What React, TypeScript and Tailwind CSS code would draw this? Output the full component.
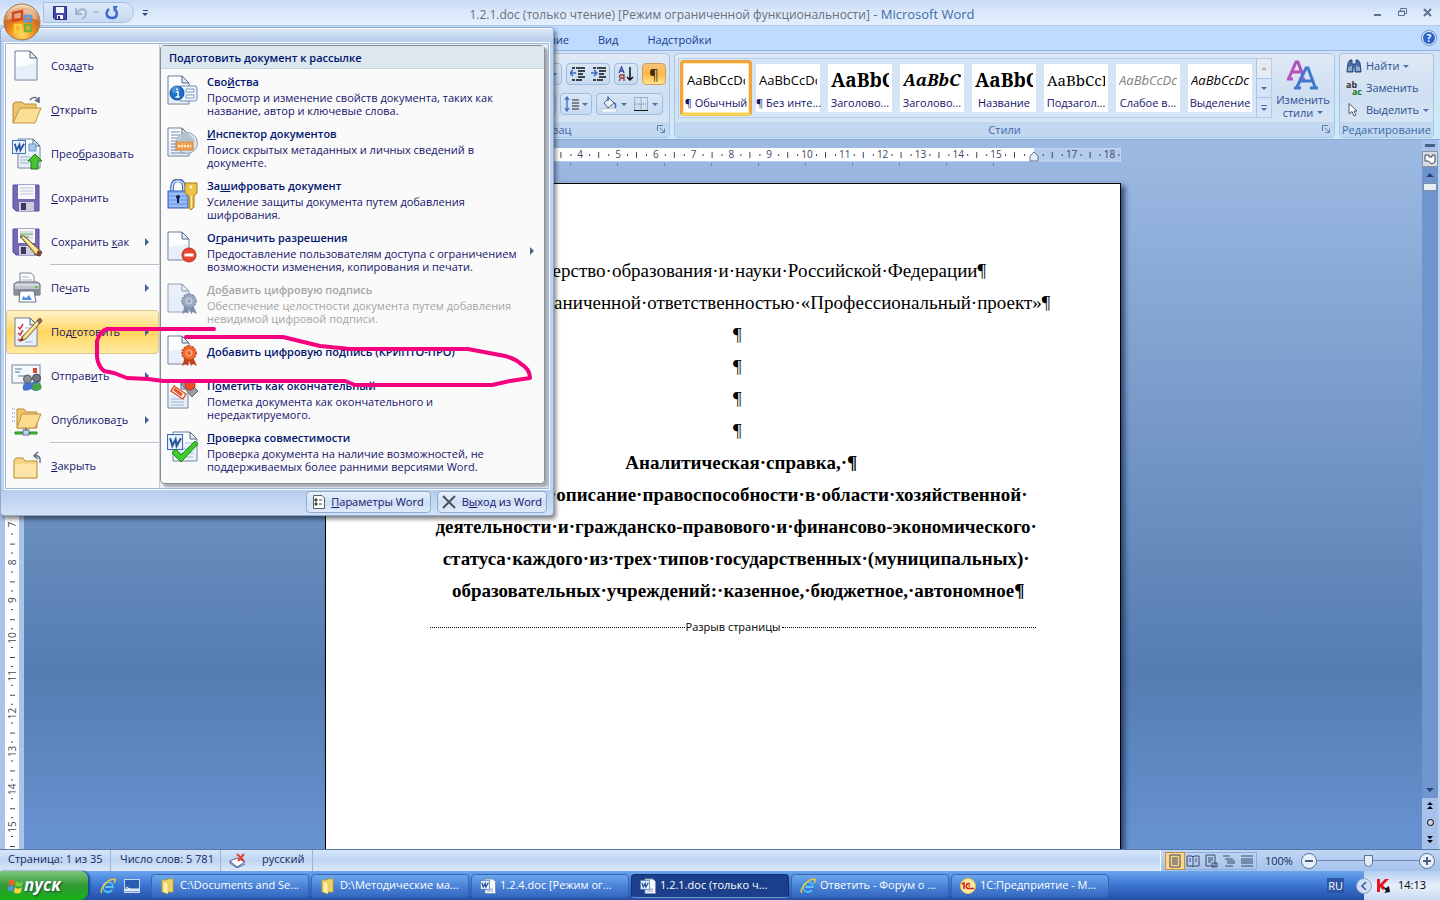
import type { ReactNode } from "react";

/* ---------- shared icon parts ---------- */

function Sheet({ x = 4, y = 1, w = 22, h = 29, fill = "#fbfdff" }: { x?: number; y?: number; w?: number; h?: number; fill?: string }) {
  const r = x + w;
  const b = y + h;
  return (
    <>
      <path d={`M${x} ${y}H${r - 7}L${r} ${y + 7}V${b}H${x}Z`} fill={fill} stroke="#6c7f9c" />
      <path d={`M${x + 1} ${b - 1}V${b - 13}L${r - 1} ${y + 12}V${b - 1}Z`} fill="#dbe8f6" opacity="0.6" />
      <path d={`M${r - 7} ${y}V${y + 7}H${r}Z`} fill="#e3ecf6" stroke="#53647f" />
    </>
  );
}

function Pencil() {
  return (
    <g>
      <path d="M29 2L31 5L15 23L10 25L12 20Z" fill="#eec667" stroke="#6b5423" strokeWidth="0.8" />
      <path d="M29 2L31 5L28 8L25.500 5Z" fill="#8d6c62" stroke="#5d4840" strokeWidth="0.6" />
      <path d="M27 6L13.500 21.500" stroke="#fff2b8" strokeWidth="1.2" />
      <path d="M10 25L11 22.500L12.500 24Z" fill="#222" />
    </g>
  );
}

function Rosette({ main, dark }: { main: string; dark: string }) {
  return (
    <g>
      <path d="M18 22L15 31L19 29L21 31L22 25L24 31L26 29L30 31L26 22Z" fill={dark} />
      <circle cx="22" cy="18" r="7" fill={main} stroke={dark} strokeDasharray="2 1" strokeWidth="1.5" />
      <circle cx="22" cy="18" r="3.500" fill="#fff" opacity="0.45" />
      <circle cx="22" cy="18" r="2.200" fill={main} />
    </g>
  );
}

function Floppy() {
  return (
    <>
      <path d="M2 3H28V29H5L2 26Z" fill="#7767b4" stroke="#57499a" />
      <rect x="7" y="3" width="17" height="14" fill="#f6f8fb" />
      <path d="M9 6H22M9 9H22M9 12H22" stroke="#bcc6d4" />
      <rect x="8" y="20" width="15" height="9" fill="#c9ced8" />
      <rect x="10" y="21" width="5" height="7" fill="#40385f" />
    </>
  );
}

function WordMark({ x, y, s = 14 }: { x: number; y: number; s?: number }) {
  return (
    <g transform={`translate(${x} ${y}) scale(${s / 14})`}>
      <rect x="0.500" y="0.500" width="14" height="14" fill="#eaf2fd" stroke="#3b6bb5" />
      <path d="M3 4L5 11L8 5L9 11L13 4" fill="none" stroke="#2b579a" strokeWidth="2" />
    </g>
  );
}

function Icon({ children }: { children: ReactNode }) {
  return (
    <svg viewBox="0 0 32 32" className="size-8 shrink-0" aria-hidden="true">
      {children}
    </svg>
  );
}

const NewIcon = <Icon><Sheet /></Icon>;

const OpenIcon = (
  <Icon>
    <path d="M2 29V10L4 8H11L13 10H25V15H10Z" fill="#efc470" stroke="#b98a35" />
    <path d="M2 29L9 14H30L24 29Z" fill="#fbdf97" stroke="#c3943c" />
    <path d="M19 6C22 2 26 3 27 6M28 3V8L24 6" fill="none" stroke="#4d5e77" strokeWidth="1.4" />
  </Icon>
);

const ConvertIcon = (
  <Icon>
    <Sheet x={7} y={1} w={22} h={29} />
    <rect x="18" y="6" width="7" height="7" fill="#a9c7ea" stroke="#6f95c7" />
    <path d="M9 19H19M9 22H18M9 25H18" stroke="#9fb0c6" />
    <WordMark x={1} y={2} s={13} />
    <path d="M24 16L31 23H27V31H20V23H17Z" fill="#48c22f" stroke="#1c7a10" />
  </Icon>
);

const SaveIcon = <Icon><Floppy /></Icon>;

const SaveAsIcon = (
  <Icon>
    <Floppy />
    <path d="M9 8H22M9 11H18" stroke="#4db14d" strokeWidth="1.2" />
    <path d="M9 10L13 10L31 26L29 30L25 29Z" fill="#f1cf76" stroke="#5c481d" />
    <path d="M25 29L27 24L31 26L29 30Z" fill="#7b4b43" />
    <path d="M12 11L26 25" stroke="#fff4c8" strokeWidth="1.3" />
  </Icon>
);

const PrintIcon = (
  <Icon>
    <path d="M9 12V1H20L23 4V12Z" fill="#fff" stroke="#7686a0" />
    <path d="M11 5H18M11 8H21" stroke="#a7b2c4" />
    <path d="M3 12L6 10H26L29 12V23H3Z" fill="#bfc4cc" stroke="#59606d" />
    <path d="M3 17H29V23H3Z" fill="#868d99" />
    <path d="M4 13H28" stroke="#eef0f3" />
    <rect x="24" y="14" width="3" height="2" fill="#57c84b" />
    <path d="M9 19H23L25 30H8Z" fill="#fff" stroke="#60748f" />
    <path d="M11 28L12 24L15 26L18 23L21 28Z" fill="#4b92dc" />
  </Icon>
);

const PrepareIcon = (
  <Icon>
    <Sheet x={4} y={2} w={22} h={28} />
    <path d="M7 11L9 13L12 8M7 17L9 19L12 14M7 23L9 25L12 20" fill="none" stroke="#e03a3a" strokeWidth="1.5" />
    <path d="M14 12H20M14 18H20M14 26H22" stroke="#a0b1c8" />
    <Pencil />
  </Icon>
);

const SendIcon = (
  <Icon>
    <rect x="1" y="5" width="28" height="18" fill="#f5f9fd" stroke="#7285a0" />
    <rect x="22" y="8" width="4" height="5" fill="#d84c34" />
    <path d="M4 9H11M4 12H9M7 16H14" stroke="#56759e" />
    <path d="M12 30C11 22 16 21 20 23C25 20 31 22 30 29C26 32 22 31 20 29C17 31 14 31 12 30Z" fill="#4672d0" />
    <path d="M21 29C21 24 24 22 28 23C31 25 31 28 30 29C27 31 24 31 21 29Z" fill="#46a548" />
    <circle cx="16.500" cy="19" r="4" fill="#8b9099" stroke="#545b66" />
    <circle cx="25.500" cy="18" r="4" fill="#707782" stroke="#444b56" />
  </Icon>
);

const PublishIcon = (
  <Icon>
    <path d="M1 5H4M1 9H4M1 13H4M1 17H4" stroke="#7c8da8" strokeDasharray="1 1" />
    <path d="M6 24V5H13L15 8H26V24Z" fill="#efc46b" stroke="#b98934" />
    <path d="M6 24L11 10H30L24 24Z" fill="#fbdc90" stroke="#c3923a" />
    <path d="M15 24V28M4 29H26" stroke="#68788c" strokeWidth="2" />
    <path d="M4 28H11V30H4ZM19 28H26V30H19Z" fill="#53c54b" stroke="#228923" />
    <rect x="12" y="26" width="6" height="5" fill="#bfd3e6" stroke="#5a7088" />
  </Icon>
);

const CloseIcon = (
  <Icon>
    <path d="M3 28V10L5 8H12L14 11H26V28Z" fill="#f7d486" stroke="#bc8c36" />
    <path d="M4 27V14H25V27Z" fill="#fce5a6" />
    <path d="M29 13C30 8 28 5 24 6M27 2L23 6L27 9" fill="none" stroke="#566880" strokeWidth="1.4" />
  </Icon>
);

const PropsIcon = (
  <Icon>
    <Sheet x={1} y={1} w={21} h={28} />
    <rect x="12" y="11" width="18" height="15" rx="2" fill="#eef4fb" stroke="#6d88b0" />
    <path d="M19 14H27V17H19ZM19 20H27V23H19Z" fill="#fff" stroke="#7d96bb" />
    <circle cx="10" cy="18" r="7" fill="#1d70c7" stroke="#0d4b95" />
    <circle cx="8.500" cy="14.500" r="4" fill="#75b3ee" opacity="0.5" />
    <path d="M9 17H11V22M8.500 22H12.500M10 13.500V15" stroke="#fff" strokeWidth="1.6" />
  </Icon>
);

const InspectIcon = (
  <Icon>
    <Sheet x={1} y={1} w={21} h={28} />
    <path d="M4 5H13M4 8H13M4 11H12M4 14H10M4 17H9M4 20H9M4 23H11M4 26H18" stroke="#7488a6" />
    <circle cx="20" cy="16" r="10.500" fill="#d4dfea" fillOpacity="0.85" stroke="#92a0b0" />
    <path d="M11 14L15 7H22L28 14Z" fill="#b3c2d2" />
    <rect x="9" y="15" width="17" height="8" fill="#f0a45a" stroke="#cf7f36" />
    <path d="M11 19H24" stroke="#fff0d8" strokeDasharray="2 1" strokeWidth="2" />
  </Icon>
);

const EncryptIcon = (
  <Icon>
    <path d="M5 14V8C5 -1 17 -1 17 8V14" fill="none" stroke="#4f76c8" strokeWidth="4" />
    <path d="M5 14V8C5 0 17 0 17 8V14" fill="none" stroke="#dceafd" strokeWidth="1.5" />
    <rect x="1" y="12" width="20" height="17" fill="#7da6ee" stroke="#3a61b4" />
    <path d="M2 15H20M2 19H20M2 23H20M2 27H20" stroke="#b9d2fb" />
    <path d="M11 24V19" stroke="#0c1d50" strokeWidth="2" />
    <circle cx="11" cy="18" r="2" fill="#0c1d50" />
    <path d="M18 4H30V14L27 17V28L24 31L22 29V17L18 14Z" fill="#ecc24a" stroke="#a37a1c" />
    <circle cx="24" cy="8" r="1.500" fill="#fff7d0" />
    <path d="M24.500 17V29" stroke="#fff0a8" />
  </Icon>
);

const RestrictIcon = (
  <Icon>
    <Sheet x={1} y={1} w={21} h={28} />
    <circle cx="22" cy="24" r="7" fill="#e8472b" stroke="#b5311b" />
    <path d="M17.500 24H26.500" stroke="#fff" strokeWidth="3" />
  </Icon>
);

const SignDisabledIcon = (
  <Icon>
    <g opacity="0.7"><Sheet x={1} y={1} w={21} h={28} fill="#e4edf8" /></g>
    <Rosette main="#9aa9c0" dark="#7d8eaa" />
  </Icon>
);

const SignIcon = (
  <Icon>
    <Sheet x={1} y={1} w={21} h={28} />
    <Rosette main="#f4682a" dark="#c63f16" />
  </Icon>
);

const FinalIcon = (
  <Icon>
    <Sheet x={1} y={3} w={20} h={26} />
    <path d="M4 20H16M4 23H17M4 26H17" stroke="#9fb0c6" />
    <path d="M7 7L19 15L16 20L4 12Z" fill="#fff" stroke="#e2552e" strokeWidth="1.500" />
    <path d="M7 10L15 16" stroke="#e2552e" strokeWidth="3" />
    <path d="M14 5L20 1L31 12L25 18Z" fill="#999fa9" stroke="#5f6672" />
    <circle cx="23" cy="6" r="5" fill="#ee4a26" stroke="#b83216" />
  </Icon>
);

const CompatIcon = (
  <Icon>
    <Sheet x={6} y={1} w={24} h={29} />
    <path d="M18 12H26M10 18H26M10 22H26M10 26H26" stroke="#9fb4d0" />
    <WordMark x={0} y={3} s={15} />
    <path d="M5 22L9 18L14 24L28 10L31 13L14 31Z" fill="#3ecb2c" stroke="#178a10" />
  </Icon>
);

/* ---------- menu data ---------- */

type MenuItem = { pre: string; key: string; post: string; icon: ReactNode; arrow?: boolean; active?: boolean; sep?: boolean };

const MENU: MenuItem[] = [
  { pre: "Созд", key: "а", post: "ть", icon: NewIcon },
  { pre: "", key: "О", post: "ткрыть", icon: OpenIcon },
  { pre: "Прео", key: "б", post: "разовать", icon: ConvertIcon },
  { pre: "", key: "С", post: "охранить", icon: SaveIcon },
  { pre: "Сохранить ", key: "к", post: "ак", icon: SaveAsIcon, arrow: true, sep: true },
  { pre: "Пе", key: "ч", post: "ать", icon: PrintIcon, arrow: true },
  { pre: "Под", key: "г", post: "отовить", icon: PrepareIcon, arrow: true, active: true },
  { pre: "Отправ", key: "и", post: "ть", icon: SendIcon, arrow: true },
  { pre: "Опубликова", key: "т", post: "ь", icon: PublishIcon, arrow: true, sep: true },
  { pre: "", key: "З", post: "акрыть", icon: CloseIcon },
];

type SubItem = { pre: string; key: string; post: string; lines: string[]; icon: ReactNode; arrow?: boolean; disabled?: boolean };

const SUBMENU: SubItem[] = [
  { pre: "Сво", key: "й", post: "ства", lines: ["Просмотр и изменение свойств документа, таких как", "название, автор и ключевые слова."], icon: PropsIcon },
  { pre: "", key: "И", post: "нспектор документов", lines: ["Поиск скрытых метаданных и личных сведений в", "документе."], icon: InspectIcon },
  { pre: "За", key: "ш", post: "ифровать документ", lines: ["Усиление защиты документа путем добавления", "шифрования."], icon: EncryptIcon },
  { pre: "О", key: "г", post: "раничить разрешения", lines: ["Предоставление пользователям доступа с ограничением", "возможности изменения, копирования и печати."], icon: RestrictIcon, arrow: true },
  { pre: "До", key: "б", post: "авить цифровую подпись", lines: ["Обеспечение целостности документа путем добавления", "невидимой цифровой подписи."], icon: SignDisabledIcon, disabled: true },
  { pre: "Добавить цифровую подпись (КРИПТО-ПРО)", key: "", post: "", lines: [], icon: SignIcon },
  { pre: "П", key: "о", post: "метить как окончательный", lines: ["Пометка документа как окончательного и", "нередактируемого."], icon: FinalIcon },
  { pre: "", key: "П", post: "роверка совместимости", lines: ["Проверка документа на наличие возможностей, не", "поддерживаемых более ранними версиями Word."], icon: CompatIcon },
];

function MenuArrow() {
  return (
    <svg viewBox="0 0 4 8" className="h-2 w-1 shrink-0" aria-hidden="true">
      <path d="M0 0L4 4L0 8Z" fill="#46618f" />
    </svg>
  );
}

function Caret({ color = "#4d73a8" }: { color?: string }) {
  return (
    <svg viewBox="0 0 6 3" className="h-[3px] w-1.5 shrink-0" aria-hidden="true">
      <path d="M0 0H6L3 3Z" fill={color} />
    </svg>
  );
}

function OfficeMenu() {
  return (
    <div className="absolute left-0 top-[27px] z-20 w-[554px] rounded border border-[#8fa9cf] bg-[#bdd2ee] px-1 shadow-[2px_3px_4px_rgba(0,0,0,0.5)]">
      <div className="-mx-1 h-[15px] rounded-t border-t border-white bg-gradient-to-b from-[#dae7f7] to-[#b3cbea]" />
      <div className="flex border border-[#9bb7dc] bg-[#e9eef5] outline outline-white">
        <ul className="w-[154px] shrink-0 border-r border-[#c5d0de] bg-[#fafafa]">
          {MENU.map((m) => (
            <li key={m.pre + m.key + m.post}>
              <button
                type="button"
                className={`flex h-11 w-full items-center gap-2 rounded-sm border pl-1 pr-[9px] text-left text-[11px] text-[#15156b] ${
                  m.active
                    ? "border-[#dcc48b] bg-gradient-to-b from-[#fff3c9] via-[#ffd65b] to-[#ffe9a0]"
                    : "border-transparent"
                }`}
              >
                {m.icon}
                <span className="flex-1 whitespace-nowrap">
                  {m.pre}
                  <u>{m.key}</u>
                  {m.post}
                </span>
                {m.arrow && <MenuArrow />}
              </button>
              {m.sep && <div className="ml-11 h-0.5 border-t border-[#b8bec8] bg-white" />}
            </li>
          ))}
        </ul>
        <section className="mb-1 mt-px w-[385px] rounded-sm border border-[#868e9a] bg-[#fafafa] pb-0.5 shadow-[3px_3px_2px_#a8acb3]">
          <h2 className="mb-0.5 h-[23px] border-b border-[#c5d2df] bg-[#dde7ee] pl-2 text-[11px] font-semibold leading-6 text-[#00156e]">
            Подготовить документ к рассылке
          </h2>
          {SUBMENU.map((s) => (
            <button
              key={s.pre + s.key + s.post}
              type="button"
              disabled={s.disabled}
              className={`flex w-full gap-2 pl-[6px] pr-2.5 pt-1 text-left text-[11px] leading-[13px] ${s.lines.length ? "h-[52px]" : "h-11"} ${
                s.disabled ? "text-[#a5a5a5]" : "text-[#15156b]"
              }`}
            >
              {s.icon}
              <span className={`flex-1 whitespace-nowrap ${s.lines.length ? "" : "pt-2.5"}`}>
                <span className={`mb-[3px] block font-semibold ${s.disabled ? "" : "text-[#00156e]"}`}>
                  {s.pre}
                  <u>{s.key}</u>
                  {s.post}
                </span>
                {s.lines.map((l) => (
                  <span key={l} className="block">{l}</span>
                ))}
              </span>
              {s.arrow && <span className="pt-4"><MenuArrow /></span>}
            </button>
          ))}
        </section>
      </div>
      <div className="-mx-1 flex h-[26px] items-center justify-end gap-1.5 rounded-b bg-gradient-to-b from-[#b4cced] to-[#d3e2f5] pr-1.5 text-[11px] text-[#15156b]">
        <button type="button" className="flex h-[22px] items-center gap-1.5 rounded-sm border border-[#8eabd3] bg-gradient-to-b from-[#eaf2fc] via-[#cfe0f5] to-[#dfeafa] px-1.5">
          <svg viewBox="0 0 12 14" className="h-3.5 w-3" aria-hidden="true">
            <path d="M0.500 0.500H9L11.500 3V13.500H0.500Z" fill="#fff" stroke="#555f70" />
            <path d="M2 4H4V6H2ZM2 8H4V10H2ZM6 5H9M6 9H9" stroke="#444" fill="#444" />
          </svg>
          <span><u>П</u>араметры Word</span>
        </button>
        <button type="button" className="flex h-[22px] items-center gap-1.5 rounded-sm border border-[#8eabd3] bg-gradient-to-b from-[#eaf2fc] via-[#cfe0f5] to-[#dfeafa] px-1">
          <svg viewBox="0 0 14 14" className="size-3.5" aria-hidden="true">
            <path d="M1 1L13 13M13 1L1 13" stroke="#4c525c" strokeWidth="2" />
          </svg>
          <span>В<u>ы</u>ход из Word</span>
        </button>
      </div>
    </div>
  );
}

/* ---------- title bar ---------- */

function OfficeButton() {
  return (
    <button type="button" aria-label="Office" className="absolute left-[3px] top-[3px] z-30 size-[38px]">
      <svg viewBox="0 0 38 38" className="size-full">
        <defs>
          <radialGradient id="orb" cx="0.5" cy="0.85" r="0.8">
            <stop offset="0" stopColor="#ffdf62" />
            <stop offset="0.450" stopColor="#f08a1c" />
            <stop offset="0.700" stopColor="#c96a2a" />
            <stop offset="1" stopColor="#f7d9b8" />
          </radialGradient>
        </defs>
        <circle cx="19" cy="19" r="18" fill="url(#orb)" stroke="#a07347" />
        <path d="M4 17C6 3 32 3 34 17C25 14 13 14 4 17Z" fill="#fff" opacity="0.4" />
        <g fill="none" strokeWidth="2.400">
          <path d="M10 10L19 8V16L10 18Z" stroke="#d5481f" />
          <path d="M22 13H28V18H22Z" stroke="#5d9ade" />
          <path d="M12 22H18V29H12Z" stroke="#f9d23a" />
          <path d="M22 22H28V28H22Z" stroke="#74b43c" />
        </g>
      </svg>
    </button>
  );
}

function TitleBar() {
  return (
    <header className="flex h-[26px] items-center border-b border-[#b2c9e8] bg-gradient-to-b from-[#c6dbf6] via-[#dbe8fa] to-[#e4effd]">
      <div className="w-[180px] pl-[43px]">
        <div className="flex items-center gap-2">
          <div className="flex h-[21px] w-[91px] items-center gap-1.5 rounded-r-full border border-[#a5bfe2] bg-gradient-to-b from-[#dde9f9] to-[#c6d9f2] pl-[9px]">
            <button type="button" aria-label="Сохранить">
              <svg viewBox="0 0 14 14" className="size-3.5">
                <path d="M0.500 0.500H13.500V13.500H2L0.500 12Z" fill="#4848b4" stroke="#29297c" />
                <rect x="3" y="1" width="8" height="6" fill="#f2f6fc" />
                <rect x="4" y="9" width="6" height="4" fill="#fff" />
                <rect x="5" y="10" width="2" height="3" fill="#29297c" />
              </svg>
            </button>
            <button type="button" aria-label="Отменить" className="ml-0.5 flex items-center gap-1">
              <svg viewBox="0 0 14 14" className="size-3.5">
                <path d="M1 2V8H7M2 7C5 2 11 2 11 7C11 10 9 12 7 13" fill="none" stroke="#a5b4cc" strokeWidth="2" />
              </svg>
              <Caret color="#b0bed3" />
            </button>
            <button type="button" aria-label="Повторить">
              <svg viewBox="0 0 14 14" className="size-3.5">
                <path d="M4 3C0 6 1 12 7 12C13 12 13 5 9 3" fill="none" stroke="#3e6cc4" strokeWidth="2.500" />
                <path d="M8 0H13L9 6Z" fill="#3e6cc4" />
              </svg>
            </button>
          </div>
          <button type="button" aria-label="Настройка панели" className="flex flex-col items-center gap-0.5">
            <span className="h-px w-[5px] bg-[#2c4a80]" />
            <Caret color="#2c4a80" />
          </button>
        </div>
      </div>
      <h1 className="flex-1 whitespace-nowrap pt-1 text-center text-[13px] text-[#3e6aaa]">
        <span className="text-[12px] text-[#696f7c]">1.2.1.doc (только чтение) [Режим ограниченной функциональности]</span> - Microsoft Word
      </h1>
      <div className="flex w-[176px] items-center justify-end gap-4 pr-2 text-[#5f7190]">
        <button type="button" aria-label="Свернуть">
          <svg viewBox="0 0 9 9" className="size-[9px]"><path d="M1 7H8" stroke="currentColor" strokeWidth="2" /></svg>
        </button>
        <button type="button" aria-label="Восстановить">
          <svg viewBox="0 0 9 9" className="size-[9px]" fill="none" stroke="currentColor">
            <path d="M2.500 2.500V0.500H8.500V5.500H7M0.500 3H6.500V7.500H0.500ZM0 3.500H7" />
          </svg>
        </button>
        <button type="button" aria-label="Закрыть">
          <svg viewBox="0 0 9 9" className="size-[9px]"><path d="M1 1L8 8M8 1L1 8" stroke="currentColor" strokeWidth="2" /></svg>
        </button>
      </div>
    </header>
  );
}

/* ---------- ribbon ---------- */

const STYLES = [
  { name: "¶ Обычный", sample: "AaBbCcDc", look: "text-[13px] text-black", selected: true },
  { name: "¶ Без инте...", sample: "AaBbCcDc", look: "text-[13px] text-black" },
  { name: "Заголово...", sample: "AaBbC", look: "font-['Noto_Serif','Liberation_Serif',serif] text-[19px] font-bold text-black" },
  { name: "Заголово...", sample: "AaBbCc", look: "font-['Noto_Serif','Liberation_Serif',serif] text-[17px] font-bold italic text-black" },
  { name: "Название", sample: "AaBbC", look: "font-['Noto_Serif','Liberation_Serif',serif] text-[19px] font-bold text-black" },
  { name: "Подзагол...", sample: "AaBbCcI", look: "font-['Noto_Serif','Liberation_Serif',serif] text-[15px] text-black" },
  { name: "Слабое в...", sample: "AaBbCcDc", look: "text-[13px] italic text-[#808080]" },
  { name: "Выделение", sample: "AaBbCcDc", look: "text-[13px] italic text-black" },
];

function Group({ label, className, launcher, children }: { label: string; className: string; launcher?: boolean; children: ReactNode }) {
  return (
    <section className={`flex flex-col overflow-hidden rounded border border-[#a9c4e5] bg-gradient-to-b from-[#dfe9f5] via-[#cfdff1] to-[#d9e8f8] ${className}`}>
      <div className="flex-1">{children}</div>
      <div className="relative h-[15px] bg-[#c1d8f0] text-center text-[11px] leading-[15px] text-[#3e6aaa]">
        {label}
        {launcher && (
          <button type="button" aria-label={`${label}: параметры`} className="absolute right-1 top-[3px]">
            <svg viewBox="0 0 8 8" className="size-2" fill="none" stroke="#5b7fb2">
              <path d="M0.500 6V0.500H6M3 3L7 7M7.500 3.500V7.500H3.500" />
            </svg>
          </button>
        )}
      </div>
    </section>
  );
}

const toolBox = "flex h-[22px] items-center rounded-sm border border-[#9dbbe0] bg-gradient-to-b from-[#d8e6f6] to-[#c6daf1]";

function IndentIcon({ right }: { right?: boolean }) {
  return (
    <svg viewBox="0 0 16 14" className="h-3.5 w-4" aria-hidden="true">
      <path d="M2 1H5M6 1H15M8 4H15M8 7H13M8 10H15M2 13H5M6 13H12" stroke="#111" strokeWidth="1.500" />
      <path d={right ? "M0 6H5M3 3L6 6L3 9" : "M6 6H1M3 3L0 6L3 9"} fill="none" stroke="#3a69c0" strokeWidth="1.500" />
    </svg>
  );
}

function ParagraphTools() {
  return (
    <div className="flex flex-col items-end gap-2 pr-[3px] pt-[9px]">
      <div className="flex gap-1">
        <button type="button" aria-label="Список" className={`${toolBox} w-7 justify-end pr-1`}><Caret /></button>
        <div className={toolBox}>
          <button type="button" aria-label="Уменьшить отступ" className="px-[3px]"><IndentIcon /></button>
          <button type="button" aria-label="Увеличить отступ" className="px-[2px]"><IndentIcon right /></button>
        </div>
        <button type="button" aria-label="Сортировка" className={`${toolBox} w-6 justify-center`}>
          <svg viewBox="0 0 16 16" className="size-4" fill="none">
            <path d="M1 7L3.500 1L6 7M2 5H5" stroke="#2f4a9c" strokeWidth="1.300" />
            <path d="M6 15V9H3C1 9 1 12 3 12H6M3 12L1 15" stroke="#9c2f3a" strokeWidth="1.300" />
            <path d="M12 1V14M9 11L12 14L15 11" stroke="#111" strokeWidth="1.500" />
          </svg>
        </button>
        <button type="button" aria-label="Все знаки" className="flex h-[22px] w-6 items-center justify-center rounded-sm border border-[#c9a15b] bg-gradient-to-b from-[#fbc37a] via-[#ffb84a] to-[#ffe48c] text-[15px] text-[#4a2c10]">
          ¶
        </button>
      </div>
      <div className="flex gap-1 pr-[3px]">
        <button type="button" aria-label="По ширине" className={`${toolBox} w-6 justify-center`}>
          <svg viewBox="0 0 12 12" className="size-3"><path d="M0 1H12M0 4H12M0 7H12M0 10H12" stroke="#111" /></svg>
        </button>
        <button type="button" aria-label="Интервал" className={`${toolBox} w-8 justify-center gap-0.5`}>
          <svg viewBox="0 0 16 16" className="size-4" fill="none">
            <path d="M3 1V15M1 4L3 1L5 4M1 12L3 15L5 12" stroke="#3a69c0" strokeWidth="1.300" />
            <path d="M8 4H15M8 7H15M8 10H15M8 13H15" stroke="#222" />
          </svg>
          <Caret />
        </button>
        <div className={`${toolBox} w-[67px] justify-around`}>
          <button type="button" aria-label="Заливка" className="flex items-center gap-1">
            <svg viewBox="0 0 16 16" className="size-4">
              <path d="M3 7L8 2L13 7L7 12Z" fill="#eef3fa" stroke="#4d5f7c" />
              <path d="M7 5V0.500M13 7C15 8 15 10 14 12" fill="none" stroke="#3a69c0" strokeWidth="1.500" />
              <rect x="0.500" y="13" width="15" height="3" fill="#fff" stroke="#9aa9bd" strokeWidth="0.500" />
            </svg>
            <Caret />
          </button>
          <button type="button" aria-label="Границы" className="flex items-center gap-1">
            <svg viewBox="0 0 14 14" className="size-3.5" fill="none">
              <path d="M0.500 0.500H13.500V13M0.500 0.500V13M7 1V13M1 7H13" stroke="#6c7c94" strokeDasharray="1 1" />
              <path d="M0 13.500H14" stroke="#111" />
            </svg>
            <Caret />
          </button>
        </div>
      </div>
    </div>
  );
}

function Ribbon() {
  return (
    <div className="flex h-[89px] shrink-0 gap-1 border-b border-[#88a9d4] bg-gradient-to-b from-[#d3e2f4] to-[#c9ecf9] pb-px pr-1.5 pt-0.5">
      <div className="w-[437px] shrink-0" />
      <Group label="Абзац" className="w-[229px] shrink-0" launcher>
        <ParagraphTools />
      </Group>
      <Group label="Стили" className="min-w-0 flex-1" launcher>
        <div className="flex pl-[3px]">
          <div className="mt-1 flex h-[60px] min-w-0 flex-1 overflow-hidden border border-[#b5cde9] bg-[#d5e5f7]">
            <div className="flex flex-1 items-center pl-px">
              {STYLES.map((s, i) => (
                <button
                  key={i}
                  type="button"
                  className={`flex h-14 w-[72px] shrink-0 items-center justify-center ${
                    s.selected ? "rounded-sm border-[3px] border-[#f0a53c] border-b-[#f8cf4e] bg-[#ffe9a8]" : ""
                  }`}
                >
                  <span className="block h-12 w-16 bg-white">
                    <span className={`mx-[3px] block h-8 overflow-hidden whitespace-nowrap text-left leading-8 ${s.look}`}>{s.sample}</span>
                    <span className="block whitespace-nowrap text-center text-[11px] leading-[14px] text-[#15156b]">{s.name}</span>
                  </span>
                </button>
              ))}
            </div>
            <div className="flex w-[15px] flex-col border-l border-[#a9c4e5]">
              <button type="button" aria-label="Вверх" className="flex flex-1 items-center justify-center bg-[#e6ebf1]">
                <svg viewBox="0 0 6 3" className="h-[3px] w-1.5"><path d="M0 3H6L3 0Z" fill="#a9b4c3" /></svg>
              </button>
              <button type="button" aria-label="Вниз" className="flex flex-1 items-center justify-center border-y border-[#a9c4e5]"><Caret /></button>
              <button type="button" aria-label="Ещё" className="flex flex-1 flex-col items-center justify-center gap-0.5">
                <span className="h-px w-1.5 bg-[#4d73a8]" />
                <Caret />
              </button>
            </div>
          </div>
          <button type="button" className="w-[62px] shrink-0 pt-1.5 text-center text-[11px] leading-[13px] text-[#2a4f8f]">
            <svg viewBox="0 0 32 30" className="mx-auto mb-[3px] h-[30px] w-8" fill="none">
              <path d="M2 18L9 2H11L16 16M5 12H13M0 19H6M12 19H18" stroke="#b650b8" strokeWidth="3" />
              <path d="M10 27L19 8H21L28 27M13 21H25M7 28H14M23 28H31" stroke="#3f78cf" strokeWidth="3" />
            </svg>
            <span className="block">Изменить</span>
            <span className="flex items-center justify-center gap-1">стили <Caret /></span>
          </button>
        </div>
      </Group>
      <Group label="Редактирование" className="w-[95px] shrink-0">
        <div className="flex flex-col pl-1.5 pt-px text-[11px] text-[#2a4f8f]">
          <button type="button" className="flex h-[22px] items-center gap-1">
            <svg viewBox="0 0 16 14" className="h-3.5 w-4">
              <path d="M2 4L4 1H6V5H10V1H12L14 4L15 13H9V8H7V13H1Z" fill="#4a6da8" stroke="#27457c" />
              <path d="M3 8V12M5 7V12M11 7V12M13 8V12" stroke="#d7e4f7" />
            </svg>
            Найти <Caret />
          </button>
          <button type="button" className="flex h-[22px] items-center gap-1">
            <span className="flex w-4 flex-col text-[9px] font-bold leading-[7px]">
              <span className="text-left text-[#333]">ab</span>
              <span className="text-right text-[#1a7a1f]">ac</span>
            </span>
            Заменить
          </button>
          <button type="button" className="flex h-[22px] items-center gap-1">
            <svg viewBox="0 0 16 14" className="h-3.5 w-4"><path d="M3 0.500V11L6 8.500L8 13L10 12L8 8H11Z" fill="#fff" stroke="#4b5871" /></svg>
            Выделить <Caret />
          </button>
        </div>
      </Group>
    </div>
  );
}

/* ---------- rulers and page ---------- */

const CM = 37.8;

function HorizontalRuler() {
  const cm = Array.from({ length: 19 }, (_, i) => i);
  return (
    <svg className="block h-[21px] w-full" aria-hidden="true">
      <rect x="0" y="0" width="796" height="13" fill="#b3cbed" stroke="#cfdff5" />
      <rect x="104" y="0" width="605" height="13" fill="#fff" />
      {cm.map((i) => {
        const x = 104 + i * CM;
        return (
          <g key={i} fill="#3f4a5e">
            {i > 3 && i !== 16 && (
              <text x={x} y="10" fontSize="10" textAnchor="middle">{i}</text>
            )}
            <rect x={x + 9} y="6" width="1" height="2" />
            {i < 18 && <rect x={x + 18} y="4" width="1" height="6" />}
            {i < 18 && <rect x={x + 28} y="6" width="1" height="2" />}
          </g>
        );
      })}
      {Array.from({ length: 13 }, (_, i) => (
        <rect key={i} x={104 + i * 47} y="15" width="1" height="3" fill="#6480ab" />
      ))}
      <path d="M705 13V8L709 4L713 8V13Z" fill="#e7eef8" stroke="#5f7594" />
    </svg>
  );
}

function VerticalRuler() {
  return (
    <div className="flex w-6 shrink-0 bg-[#a9c3ea] pl-[5px]">
      <svg className="h-full w-[14px] bg-white" aria-hidden="true">
        {Array.from({ length: 16 }, (_, i) => {
          const y = 120 + i * CM;
          return (
            <g key={i} fill="#3f4a5e">
              {i > 6 && (
                <text x="11" y={y} fontSize="10" textAnchor="middle" transform={`rotate(-90 11 ${y})`}>{i}</text>
              )}
              <rect x="6" y={y + 9} width="2" height="1" />
              <rect x="5" y={y + 19} width="5" height="1" />
              <rect x="6" y={y + 28} width="2" height="1" />
            </g>
          );
        })}
      </svg>
    </div>
  );
}

const LINES: { text: string; tail: string; bold?: boolean }[] = [
  { text: "Министерство·образования·и·науки·Российской·Федерации", tail: "¶" },
  { text: "Общество·с·ограниченной·ответственностью·«Профессиональный·проект»", tail: "¶" },
  { text: "", tail: "¶" },
  { text: "", tail: "¶" },
  { text: "", tail: "¶" },
  { text: "", tail: "¶" },
  { text: "Аналитическая·справка,", tail: "·¶", bold: true },
  { text: "содержащая·описание·правоспособности·в·области·хозяйственной", tail: "·", bold: true },
  { text: "деятельности·и·гражданско-правового·и·финансово-экономического", tail: "·", bold: true },
  { text: "статуса·каждого·из·трех·типов·государственных·(муниципальных)", tail: "·", bold: true },
  { text: "образовательных·учреждений:·казенное,·бюджетное,·автономное", tail: "¶", bold: true },
];

function Page() {
  return (
    <article className="flex-1 border border-b-0 border-black bg-white pl-[104px] pr-[84px] pt-[71px] font-['Liberation_Serif',serif] text-[19px] leading-8 text-black shadow-[4px_3px_5px_rgba(20,40,80,0.7)]">
      {LINES.map((l, i) => (
        <p key={i} className={`flex h-8 justify-center whitespace-nowrap ${l.bold ? "font-bold" : ""}`}>
          <span>{l.text}</span>
          <span className="w-0">{l.tail}</span>
        </p>
      ))}
      <div className="mt-2.5 flex items-center font-['Open_Sans','Noto_Sans',sans-serif] text-[11px] leading-5">
        <span className="flex-1 border-t border-dotted border-black" />
        <span className="px-px">Разрыв страницы</span>
        <span className="flex-1 border-t border-dotted border-black" />
      </div>
    </article>
  );
}

function ScrollBar() {
  return (
    <div className="flex w-[18px] shrink-0 flex-col items-center border-r-2 border-[#b9d0f0] bg-[#a5c1ec] text-[#2c4470]">
      <div className="mt-1 h-[3px] w-2.5 bg-[#46608e]" />
      <button type="button" aria-label="Линейка" className="mt-1 flex size-4 items-center justify-center border border-[#8b94a3] bg-[#d8dde5]">
        <svg viewBox="0 0 12 12" className="size-3" fill="#fff" stroke="#3d4450">
          <path d="M1 2H5V4H8V2H11V9L8 11L4 8H1Z" />
        </svg>
      </button>
      <div className="flex w-full flex-1 flex-col items-center bg-[#6f95cf]">
        <button type="button" aria-label="Прокрутить вверх" className="flex h-4 items-center">
          <svg viewBox="0 0 8 4" className="h-1 w-2"><path d="M0 4H8L4 0Z" fill="currentColor" /></svg>
        </button>
        <div className="h-2 w-3.5 border border-[#7d8ea8] bg-[#e8edf4]" />
        <button type="button" aria-label="Прокрутить вниз" className="mt-auto flex h-[17px] items-center">
          <svg viewBox="0 0 8 4" className="h-1 w-2"><path d="M0 0H8L4 4Z" fill="currentColor" /></svg>
        </button>
      </div>
      <div className="flex flex-col items-center gap-2.5 pb-1.5 pt-1 text-black">
        <button type="button" aria-label="Предыдущая страница" className="flex">
          <svg viewBox="0 0 6 7" className="h-[7px] w-1.5"><path d="M0 3L3 0L6 3ZM0 7L3 4L6 7Z" fill="currentColor" /></svg>
        </button>
        <button type="button" aria-label="Объект перехода" className="size-[7px] rounded-full border border-black bg-[#cfd6e0]" />
        <button type="button" aria-label="Следующая страница" className="flex">
          <svg viewBox="0 0 6 7" className="h-[7px] w-1.5"><path d="M0 0L3 3L6 0ZM0 4L3 7L6 4Z" fill="currentColor" /></svg>
        </button>
      </div>
    </div>
  );
}

/* ---------- status bar ---------- */

function StatusBar() {
  return (
    <footer className="flex h-[22px] shrink-0 items-stretch border-t border-[#5676a8] bg-gradient-to-b from-[#d6e5f9] via-[#bfd5f3] to-[#dbe8fa] text-[11px] leading-[18px] text-[#15285c]">
      <span className="w-[111px] border-r border-[#98b4dc] pl-2">Страница: 1 из 35</span>
      <span className="w-[110px] border-r border-[#98b4dc] pl-[9px]">Число слов: 5 781</span>
      <span className="flex w-[92px] gap-[15px] border-r border-[#98b4dc] pl-2">
        <svg viewBox="0 0 18 16" className="mt-0.5 h-4 w-[18px]" aria-hidden="true">
          <path d="M1 9L8 6L16 10L8 15Z" fill="#fff" stroke="#49639a" />
          <path d="M1 9V11L8 16L16 12" fill="none" stroke="#49639a" />
          <path d="M8 2L15 9M15 2L9 9" stroke="#e2412c" strokeWidth="2" />
        </svg>
        русский
      </span>
      <div className="ml-auto flex items-center border-l border-white bg-gradient-to-b from-[#c1d7f4] to-[#a5c2ec] pl-1 pr-[5px]">
        <div className="flex h-[18px] border border-[#8fadd8]">
          {[
            "M2 1H12V13H2ZM4 4H10M4 6H10M4 8H10M4 10H10",
            "M1 2H6L7 3L8 2H13V12H8L7 13L6 12H1ZM7 3V12M3 5H5M3 7H5M9 5H11M9 7H11",
            "M2 1H11V12H2ZM4 4H9M4 6H9M4 8H7M8 9H13V13H8Z",
            "M1 2H8M3 5H11M5 7H13M5 9H13M3 12H11",
            "M1 2H13M1 5H13M1 7H13M1 9H13M1 12H13",
          ].map((d, i) => (
            <button key={i} type="button" aria-label={`Режим ${i + 1}`} className={`flex w-[18px] items-center justify-center ${i === 0 ? "bg-[#fcd58b] outline outline-[#c08f4a]" : ""}`}>
              <svg viewBox="0 0 14 14" className="size-3.5" fill="none" stroke="#3c4a66"><path d={d} /></svg>
            </button>
          ))}
        </div>
        <label htmlFor="zoom" className="ml-2 w-9">100%</label>
        <button type="button" aria-label="Уменьшить" className="flex size-4 items-center justify-center rounded-full border border-[#5c7299] bg-[#e9f0fa]">
          <span className="h-0.5 w-2 bg-[#4a5f86]" />
        </button>
        <input
          id="zoom"
          type="range"
          min={0}
          max={100}
          defaultValue={50}
          className="h-4 w-[102px] appearance-none bg-[linear-gradient(#6a87b8,#6a87b8)] bg-[length:100%_1px] bg-center bg-no-repeat [&::-webkit-slider-thumb]:h-3 [&::-webkit-slider-thumb]:w-[9px] [&::-webkit-slider-thumb]:appearance-none [&::-webkit-slider-thumb]:rounded-b-full [&::-webkit-slider-thumb]:border [&::-webkit-slider-thumb]:border-[#5c7299] [&::-webkit-slider-thumb]:bg-[#e3ebf6]"
        />
        <button type="button" aria-label="Увеличить" className="flex size-4 items-center justify-center rounded-full border border-[#5c7299] bg-[#e9f0fa]">
          <svg viewBox="0 0 8 8" className="size-2"><path d="M0 4H8M4 0V8" stroke="#4a5f86" strokeWidth="2" /></svg>
        </button>
      </div>
    </footer>
  );
}

/* ---------- XP taskbar ---------- */

function IeIcon() {
  return (
    <svg viewBox="0 0 16 16" className="size-4 shrink-0" aria-hidden="true">
      <circle cx="8" cy="9" r="5" fill="none" stroke="#1a78d0" strokeWidth="3" />
      <circle cx="8" cy="9" r="5" fill="none" stroke="#58c4fa" strokeWidth="1.800" />
      <path d="M5 9H13" stroke="#58c4fa" strokeWidth="2" />
      <path d="M10 11H15" stroke="#3a74d2" strokeWidth="2" />
      <path d="M2 15C-1 12 8 0 15 1.500C15.500 2 15 4 14 5" fill="none" stroke="#f4c531" strokeWidth="1.500" />
    </svg>
  );
}

function FolderIcon() {
  return (
    <svg viewBox="0 0 16 16" className="size-4 shrink-0" aria-hidden="true">
      <path d="M2 2H7L8 1H13V14H2Z" fill="#f2d35f" stroke="#c49d2c" strokeWidth="0.700" />
      <path d="M3 3L8 5V16L3 14Z" fill="#fff0a6" stroke="#d0aa3c" strokeWidth="0.500" />
    </svg>
  );
}

function DocIcon() {
  return (
    <svg viewBox="0 0 16 16" className="size-4 shrink-0" aria-hidden="true">
      <path d="M5 1H13L15.500 3.500V15.500H5Z" fill="#f4f7fc" stroke="#7e94ba" />
      <path d="M7 11H13M7 13H13" stroke="#8ea4c8" />
      <WordMark x={0} y={2} s={9} />
    </svg>
  );
}

function OneCIcon() {
  return (
    <svg viewBox="0 0 16 16" className="size-4 shrink-0" aria-hidden="true">
      <circle cx="8" cy="8" r="7.500" fill="#fbe9a0" stroke="#e5c454" />
      <path d="M2 6L4 5V11M10 6C6 4 5 10 8 10.500H14M10 8H8.500" fill="none" stroke="#d8251c" strokeWidth="1.600" />
    </svg>
  );
}

const TASKS = [
  { title: "C:\\Documents and Se...", icon: <FolderIcon /> },
  { title: "D:\\Методические ма...", icon: <FolderIcon /> },
  { title: "1.2.4.doc [Режим ог...", icon: <DocIcon /> },
  { title: "1.2.1.doc (только ч...", icon: <DocIcon />, active: true },
  { title: "Ответить - Форум о ...", icon: <IeIcon /> },
  { title: "1С:Предприятие - М...", icon: <OneCIcon /> },
];

function Taskbar() {
  return (
    <nav className="flex h-[29px] shrink-0 items-stretch bg-gradient-to-b from-[#6aa5ee] via-[#3a74d2] to-[#2450a8] text-[11px] text-white">
      <button type="button" className="flex w-[88px] shrink-0 items-center rounded-r-lg bg-gradient-to-b from-[#7cc67c] via-[#2f9a33] to-[#12b212] pl-2 text-[17px] font-bold italic shadow-[2px_0_2px_#1c4a98]">
        <svg viewBox="0 0 16 16" className="size-4" aria-hidden="true">
          <path d="M1 3C3 1 5 1 7 3L6 8C4 6 2 6 0 8Z" fill="#f0622d" />
          <path d="M8 3C10 5 13 5 15 3L14 8C12 9 9 9 7 8Z" fill="#7ecb3c" />
          <path d="M0 9C2 7 4 7 6 9L5 14C3 12 1 12 0 13Z" fill="#4f94ee" />
          <path d="M7 9C9 11 12 11 14 9L13 14C11 16 8 16 6 14Z" fill="#fbd33b" />
        </svg>
        <span className="pb-0.5 [text-shadow:1px_1px_2px_#143]">пуск</span>
      </button>
      <div className="flex w-[63px] shrink-0 items-center gap-2 pl-3">
        <IeIcon />
        <svg viewBox="0 0 16 14" className="h-3.5 w-4" aria-hidden="true">
          <rect x="0.500" y="0.500" width="15" height="13" fill="#2a5db4" stroke="#c7d8f0" />
          <path d="M1 11H15" stroke="#dfe9f7" strokeWidth="3" />
          <path d="M2 8L6 10" stroke="#fff" />
        </svg>
      </div>
      <div className="flex min-w-0 flex-1 items-center gap-0.5">
        {TASKS.map((t) => (
          <button
            key={t.title}
            type="button"
            className={`flex h-6 w-[158px] shrink items-center gap-1 overflow-hidden whitespace-nowrap rounded-sm border pl-2 ${
              t.active
                ? "border-[#132f6c] border-b-[#6c8fce] bg-[#1b3f8a]"
                : "border-[#3566b8] bg-gradient-to-b from-[#6ea6ea] via-[#4a84d8] to-[#3568c0]"
            }`}
          >
            {t.icon}
            {t.title}
          </button>
        ))}
      </div>
      <span className="mr-5 self-center bg-[#2c55a4] px-px leading-[15px]">RU</span>
      <div className="flex w-[76px] shrink-0 items-center gap-1 bg-gradient-to-b from-[#b4cdf0] via-[#e8f0fb] to-[#c9dbf3] text-black">
        <button type="button" aria-label="Показать значки" className="-ml-2 flex size-4 items-center justify-center rounded-full border border-[#88a2cc] bg-[#d3e0f3]">
          <svg viewBox="0 0 8 8" className="size-2" fill="none" stroke="#31549a" strokeWidth="1.500"><path d="M6 0L2 4L6 8" /></svg>
        </button>
        <svg viewBox="0 0 14 14" className="size-3.5" aria-label="Антивирус">
          <path d="M1 0H4V5L9 0H13L7 6L9 9L7 11L4 8V13H1Z" fill="#e3171b" />
          <path d="M7 8L10 9L13 7L14 13L8 14L10 12Z" fill="#111" />
        </svg>
        <span className="ml-1">14:13</span>
      </div>
    </nav>
  );
}

/* Freehand marker stroke lying over the menu */
function MarkerStroke() {
  return (
    <svg viewBox="0 0 560 520" className="pointer-events-none absolute left-0 top-0 z-40 h-[520px] w-[560px]" aria-hidden="true">
      <path
        d="M214 329H107Q100 331 97 341V357Q98 366 104 371L114 373L127 378L148 379L163 381H305L345 381L355 385H492L510 381L530 378Q530 369 521 364Q516 359 505 356L468 349H350L320 346L283 337H186"
        fill="none"
        stroke="#f5007f"
        strokeWidth="4"
        strokeLinecap="round"
        strokeLinejoin="round"
      />
    </svg>
  );
}

export default function App() {
  return (
    <div className="relative flex h-screen flex-col overflow-hidden bg-[#bfdbff] font-['Open_Sans','Noto_Sans',sans-serif]">
      <TitleBar />
      <div className="flex h-[25px] shrink-0 items-center border-b border-[#8db2e3] bg-[#bfdbff] pr-1 pt-1 text-[11px] text-[#15428b]">
        <div className="flex w-[569px] justify-end overflow-hidden">
          <button type="button">Рецензирование</button>
        </div>
        <button type="button" className="ml-[29px]">Вид</button>
        <button type="button" className="ml-[29px]">Надстройки</button>
        <button type="button" aria-label="Справка" className="mb-1 ml-auto flex size-3.5 items-center justify-center rounded-full border border-white bg-[#2a62c9] text-[10px] font-bold text-white outline outline-[#6d92d0]">
          ?
        </button>
      </div>
      <Ribbon />
      <main className="flex min-h-0 flex-1 bg-gradient-to-b from-[#9dbae3] via-[#557db1] via-75% to-[#6893d2]">
        <VerticalRuler />
        <div className="flex min-w-0 flex-1 justify-center overflow-hidden">
          <div className="flex w-[796px] shrink-0 flex-col pt-2">
            <HorizontalRuler />
            <div className="h-3.5" />
            <Page />
          </div>
        </div>
        <ScrollBar />
      </main>
      <StatusBar />
      <Taskbar />
      <OfficeMenu />
      <OfficeButton />
      <MarkerStroke />
    </div>
  );
}
